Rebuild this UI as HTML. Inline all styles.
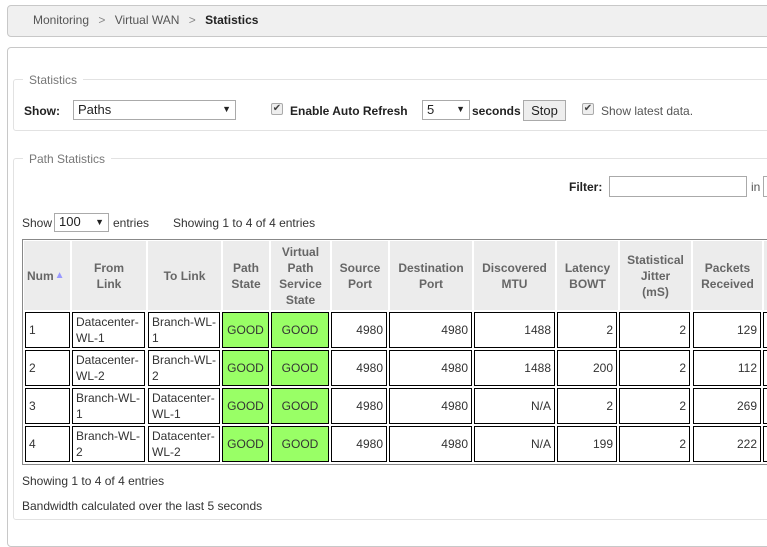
<!DOCTYPE html>
<html><head><meta charset="utf-8"><style>
*{box-sizing:border-box;margin:0;padding:0}
body{width:767px;height:526px;overflow:hidden;background:#fff;font-family:"Liberation Sans",sans-serif;font-size:12px;color:#333;position:relative}
.a{position:absolute}
.bc{left:7px;top:5px;width:780px;height:32px;background:#f0f0f0;border:1px solid #c8c8c8;border-radius:4px}
.panel{left:7px;top:47px;width:790px;height:500px;border:1px solid #c8c8c8;border-radius:4px}
.fs{border:1px solid #e2e2e2;border-radius:3px}
.lg{background:#fff;padding:0 6px;color:#777;font-size:12px}
.sel{border:1px solid #aaa;background:#fff;height:20px;font-size:13px;color:#222;padding:1px 4px}
.arr{position:absolute;right:4px;top:3px;font-size:9px}
.cb{width:12px;height:12px;border:1px solid #aaa;background:#eee;border-radius:2px;font-size:10px;line-height:10px;text-align:center;color:#444}
.h{background:#ececec;color:#666;font-weight:bold;display:flex;align-items:center;justify-content:center;text-align:center;line-height:16px;font-size:12px}
.c{border:1px solid #000;background:#fff;display:flex;align-items:center;padding:0 3px;line-height:16px;color:#333;font-size:12px}
.r{justify-content:flex-end}
.g{background:#99ff66;justify-content:center}
</style></head><body>
<div class="a bc"></div>
<div class="a" style="left:33px;top:13px;color:#555">Monitoring <span style="color:#888;margin:0 6px">&gt;</span> Virtual WAN <span style="color:#888;margin:0 6px">&gt;</span> <b style="color:#222">Statistics</b></div>
<div class="a panel"></div>
<div class="a fs" style="left:13px;top:79px;width:780px;height:52px"></div>
<div class="a lg" style="left:23px;top:73px">Statistics</div>
<div class="a" style="left:24px;top:104px;font-weight:bold;color:#222">Show:</div>
<div class="a sel" style="left:73px;top:100px;width:163px">Paths<span class="arr">▼</span></div>
<div class="a cb" style="left:271px;top:103px">✔</div>
<div class="a" style="left:290px;top:104px;font-weight:bold;color:#222">Enable Auto Refresh</div>
<div class="a sel" style="left:422px;top:100px;width:48px">5<span class="arr">▼</span></div>
<div class="a" style="left:472px;top:104px;font-weight:bold;color:#222">seconds</div>
<div class="a" style="left:523px;top:100px;width:43px;height:21px;border:1px solid #aaa;background:#eee;text-align:center;font-size:13px;line-height:19px;color:#222">Stop</div>
<div class="a cb" style="left:582px;top:103px">✔</div>
<div class="a" style="left:601px;top:104px;color:#555">Show latest data.</div>

<div class="a fs" style="left:13px;top:158px;width:780px;height:362px"></div>
<div class="a lg" style="left:23px;top:152px">Path Statistics</div>
<div class="a" style="left:569px;top:180px;font-weight:bold;color:#222">Filter:</div>
<div class="a" style="left:609px;top:176px;width:138px;height:21px;border:1px solid #aaa"></div>
<div class="a" style="left:751px;top:180px;color:#555">in</div>
<div class="a" style="left:763px;top:176px;width:20px;height:21px;border:1px solid #aaa"></div>
<div class="a" style="left:22px;top:216px;color:#333">Show</div>
<div class="a sel" style="left:54px;top:213px;width:55px;height:19px;padding:0 4px">100<span class="arr">▼</span></div>
<div class="a" style="left:113px;top:216px">entries</div>
<div class="a" style="left:173px;top:216px">Showing 1 to 4 of 4 entries</div>

<div class="a" style="left:22px;top:239px;width:780px;height:226px;border:1px solid #888"></div>
<div class="a h" style="left:24px;top:241px;width:46px;height:69px;justify-content:flex-start;padding-left:3px">Num<span style="color:#99f;font-size:10px;margin-left:1px">▲</span></div>
<div class="a h" style="left:72px;top:241px;width:74px;height:69px">From<br>Link</div>
<div class="a h" style="left:148px;top:241px;width:73px;height:69px">To Link</div>
<div class="a h" style="left:223px;top:241px;width:46px;height:69px">Path<br>State</div>
<div class="a h" style="left:271px;top:241px;width:59px;height:69px">Virtual<br>Path<br>Service<br>State</div>
<div class="a h" style="left:332px;top:241px;width:56px;height:69px">Source<br>Port</div>
<div class="a h" style="left:390px;top:241px;width:82px;height:69px">Destination<br>Port</div>
<div class="a h" style="left:474px;top:241px;width:81px;height:69px">Discovered<br>MTU</div>
<div class="a h" style="left:557px;top:241px;width:61px;height:69px">Latency<br>BOWT</div>
<div class="a h" style="left:620px;top:241px;width:71px;height:69px">Statistical<br>Jitter<br>(mS)</div>
<div class="a h" style="left:693px;top:241px;width:69px;height:69px">Packets<br>Received</div>
<div class="a h" style="left:764px;top:241px;width:20px;height:69px"></div>

<!-- rows -->
<div class="a c" style="left:25px;top:312px;width:45px;height:36px">1</div>
<div class="a c" style="left:72px;top:312px;width:73px;height:36px">Datacenter-<br>WL-1</div>
<div class="a c" style="left:148px;top:312px;width:72px;height:36px">Branch-WL-<br>1</div>
<div class="a c g" style="left:222px;top:312px;width:47px;height:36px">GOOD</div>
<div class="a c g" style="left:271px;top:312px;width:58px;height:36px">GOOD</div>
<div class="a c r" style="left:331px;top:312px;width:56px;height:36px">4980</div>
<div class="a c r" style="left:389px;top:312px;width:83px;height:36px">4980</div>
<div class="a c r" style="left:474px;top:312px;width:81px;height:36px">1488</div>
<div class="a c r" style="left:557px;top:312px;width:60px;height:36px">2</div>
<div class="a c r" style="left:619px;top:312px;width:71px;height:36px">2</div>
<div class="a c r" style="left:693px;top:312px;width:68px;height:36px">129</div>
<div class="a c" style="left:763px;top:312px;width:20px;height:36px"></div>

<div class="a c" style="left:25px;top:350px;width:45px;height:36px">2</div>
<div class="a c" style="left:72px;top:350px;width:73px;height:36px">Datacenter-<br>WL-2</div>
<div class="a c" style="left:148px;top:350px;width:72px;height:36px">Branch-WL-<br>2</div>
<div class="a c g" style="left:222px;top:350px;width:47px;height:36px">GOOD</div>
<div class="a c g" style="left:271px;top:350px;width:58px;height:36px">GOOD</div>
<div class="a c r" style="left:331px;top:350px;width:56px;height:36px">4980</div>
<div class="a c r" style="left:389px;top:350px;width:83px;height:36px">4980</div>
<div class="a c r" style="left:474px;top:350px;width:81px;height:36px">1488</div>
<div class="a c r" style="left:557px;top:350px;width:60px;height:36px">200</div>
<div class="a c r" style="left:619px;top:350px;width:71px;height:36px">2</div>
<div class="a c r" style="left:693px;top:350px;width:68px;height:36px">112</div>
<div class="a c" style="left:763px;top:350px;width:20px;height:36px"></div>

<div class="a c" style="left:25px;top:388px;width:45px;height:36px">3</div>
<div class="a c" style="left:72px;top:388px;width:73px;height:36px">Branch-WL-<br>1</div>
<div class="a c" style="left:148px;top:388px;width:72px;height:36px">Datacenter-<br>WL-1</div>
<div class="a c g" style="left:222px;top:388px;width:47px;height:36px">GOOD</div>
<div class="a c g" style="left:271px;top:388px;width:58px;height:36px">GOOD</div>
<div class="a c r" style="left:331px;top:388px;width:56px;height:36px">4980</div>
<div class="a c r" style="left:389px;top:388px;width:83px;height:36px">4980</div>
<div class="a c r" style="left:474px;top:388px;width:81px;height:36px">N/A</div>
<div class="a c r" style="left:557px;top:388px;width:60px;height:36px">2</div>
<div class="a c r" style="left:619px;top:388px;width:71px;height:36px">2</div>
<div class="a c r" style="left:693px;top:388px;width:68px;height:36px">269</div>
<div class="a c" style="left:763px;top:388px;width:20px;height:36px"></div>

<div class="a c" style="left:25px;top:426px;width:45px;height:36px">4</div>
<div class="a c" style="left:72px;top:426px;width:73px;height:36px">Branch-WL-<br>2</div>
<div class="a c" style="left:148px;top:426px;width:72px;height:36px">Datacenter-<br>WL-2</div>
<div class="a c g" style="left:222px;top:426px;width:47px;height:36px">GOOD</div>
<div class="a c g" style="left:271px;top:426px;width:58px;height:36px">GOOD</div>
<div class="a c r" style="left:331px;top:426px;width:56px;height:36px">4980</div>
<div class="a c r" style="left:389px;top:426px;width:83px;height:36px">4980</div>
<div class="a c r" style="left:474px;top:426px;width:81px;height:36px">N/A</div>
<div class="a c r" style="left:557px;top:426px;width:60px;height:36px">199</div>
<div class="a c r" style="left:619px;top:426px;width:71px;height:36px">2</div>
<div class="a c r" style="left:693px;top:426px;width:68px;height:36px">222</div>
<div class="a c" style="left:763px;top:426px;width:20px;height:36px"></div>

<div class="a" style="left:22px;top:474px">Showing 1 to 4 of 4 entries</div>
<div class="a" style="left:22px;top:499px">Bandwidth calculated over the last 5 seconds</div>
</body></html>
